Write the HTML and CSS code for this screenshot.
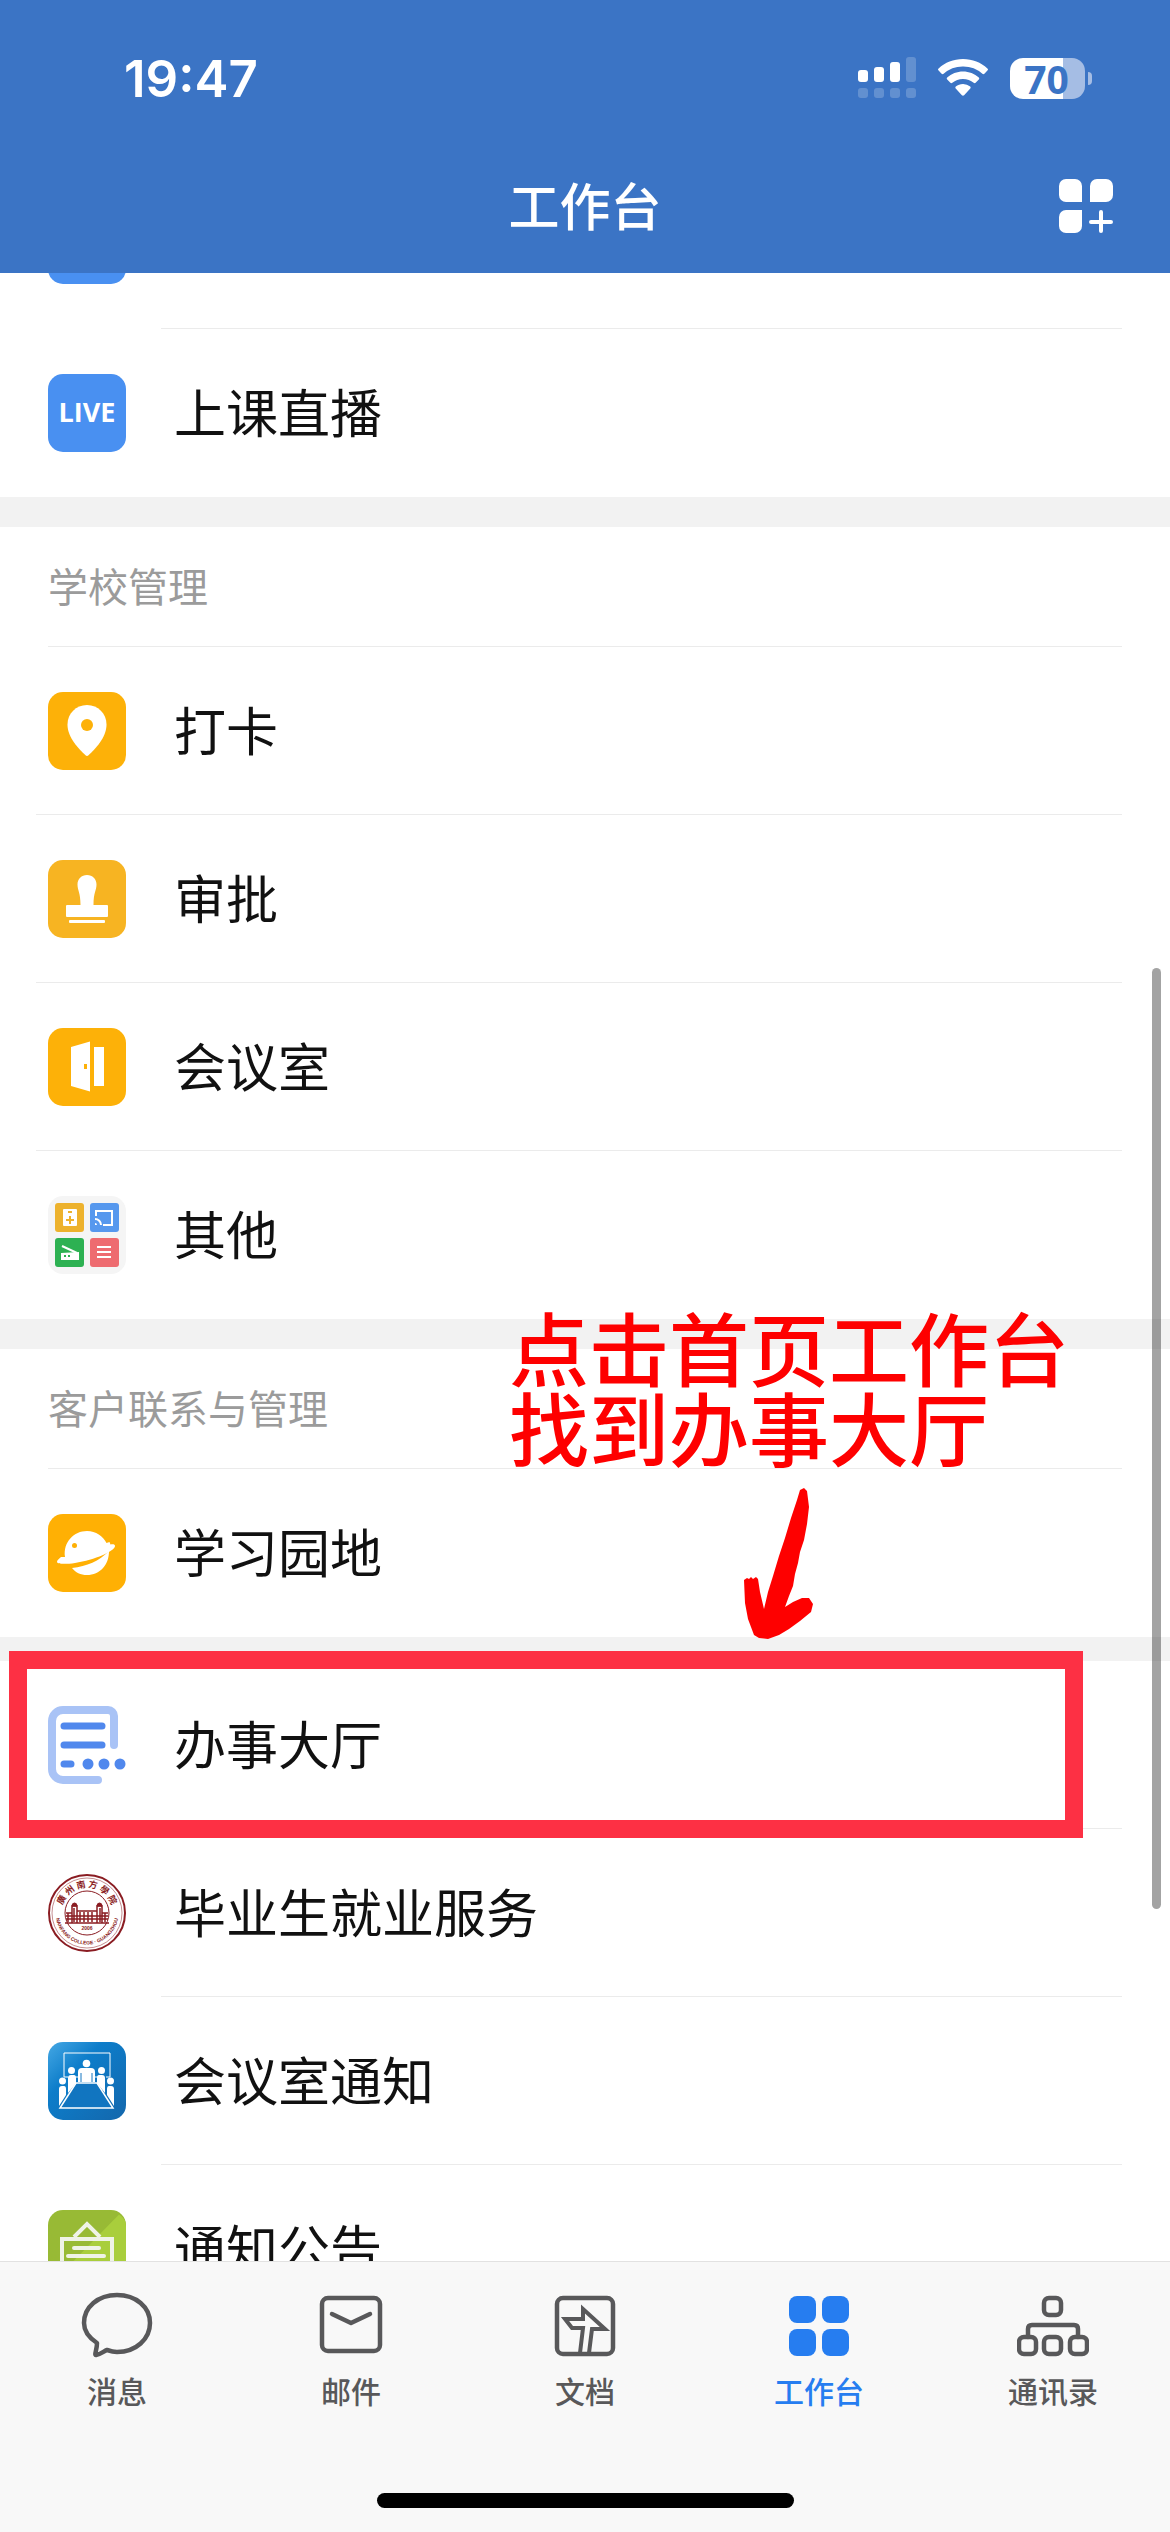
FILE: index.html
```html
<!DOCTYPE html>
<html lang="zh-CN">
<head>
    <meta charset="UTF-8">
    <meta name="viewport" content="width=device-width, initial-scale=1.0">
    <title>工作台</title>
    <link rel="stylesheet" href="styles.css">
</head>
<body>
    <header class="header">
        <div class="status-bar">
            <span class="time">19:47</span>
            <div class="status-icons">
                <svg class="signal" viewBox="0 0 58 42" fill="#fff">
                    <rect x="0" y="13" width="10" height="12" rx="3"/>
                    <rect x="16" y="10" width="10" height="15" rx="3"/>
                    <rect x="32" y="5" width="10" height="20" rx="3"/>
                    <g opacity="0.2">
                        <rect x="48" y="0" width="10" height="25" rx="3"/>
                        <rect x="0" y="31" width="10" height="10" rx="3"/>
                        <rect x="16" y="31" width="10" height="10" rx="3"/>
                        <rect x="32" y="31" width="10" height="10" rx="3"/>
                        <rect x="48" y="31" width="10" height="10" rx="3"/>
                    </g>
                </svg>
                <svg class="wifi" viewBox="0 0 50 38" fill="#fff">
                    <path d="M25 0C15.500 0 7 3.500 .6 9.400a1.500 1.500 0 0 0 0 2.200l3 3.100c.6.6 1.400.6 2 .1A28.500 28.500 0 0 1 25 7.500a28.500 28.500 0 0 1 19.400 7.300c.6.5 1.400.5 2-.1l3-3.100a1.500 1.500 0 0 0 0-2.200C43 3.500 34.500 0 25 0z"/>
                    <path d="M25 12.500c-6 0-11.600 2.300-15.800 6-.6.6-.6 1.500 0 2.100l3.200 3.200c.5.5 1.300.5 1.900 0A16.500 16.500 0 0 1 25 20c4.100 0 7.800 1.400 10.700 3.800.6.500 1.400.5 1.900 0l3.200-3.200c.6-.6.6-1.500 0-2.100-4.200-3.700-9.800-6-15.800-6z"/>
                    <path d="M25 25c-2.800 0-5.300 1-7.200 2.600-.6.5-.6 1.300-.1 1.900l6.200 6.700c.6.6 1.600.6 2.200 0l6.200-6.700c.5-.6.5-1.400-.1-1.900A11 11 0 0 0 25 25z"/>
                </svg>
                <div class="battery">70</div>
            </div>
        </div>
        <div class="title-bar">
            <h1>工作台</h1>
            <button class="add-btn" aria-label="添加应用">
                <svg viewBox="0 0 54 54" fill="#fff">
                    <path d="M7 0h9a7 7 0 0 1 7 7v16H7a7 7 0 0 1-7-7V7a7 7 0 0 1 7-7z"/>
                    <path d="M38 0h9a7 7 0 0 1 7 7v9a7 7 0 0 1-7 7H31V7a7 7 0 0 1 7-7z"/>
                    <path d="M7 31h16v16a7 7 0 0 1-7 7H7a7 7 0 0 1-7-7v-9a7 7 0 0 1 7-7z"/>
                    <path d="M42 33v19M32 43h20" stroke="#fff" stroke-width="4" stroke-linecap="round"/>
                </svg>
            </button>
        </div>
    </header>

    <main class="content">
        <section class="section scrolled">
            <a href="#" class="row" aria-label="直播">
                <span class="icon icon-live"></span>
            </a>
            <a href="#" class="row">
                <span class="icon icon-live">LIVE</span>
                <span class="name">上课直播</span>
            </a>
        </section>

        <section class="section wide">
            <h2>学校管理</h2>
            <a href="#" class="row">
                <svg class="icon" viewBox="0 0 78 78">
                    <rect width="78" height="78" rx="15" fill="#fdb108"/>
                    <path d="M39 13c-11 0-19.500 8.500-19.500 19.500C19.500 46 31 57 37.500 63.200a2.200 2.200 0 0 0 3 0C47 57 58.500 46 58.500 32.500 58.500 21.500 50 13 39 13z" fill="#fff"/>
                    <circle cx="39" cy="33" r="6" fill="#fdb108"/>
                </svg>
                <span class="name">打卡</span>
            </a>
            <a href="#" class="row">
                <svg class="icon" viewBox="0 0 78 78">
                    <rect width="78" height="78" rx="15" fill="#f7b422"/>
                    <g fill="#fff">
                        <path d="M39 15c-5.500 0-9.500 4-9.500 9.500 0 6 3 8 3 20.500h13c0-12.500 3-14.500 3-20.500 0-5.500-4-9.500-9.500-9.500z"/>
                        <rect x="18" y="45" width="42" height="12" rx="1"/>
                        <rect x="21" y="60" width="36" height="3" rx="1"/>
                    </g>
                </svg>
                <span class="name">审批</span>
            </a>
            <a href="#" class="row">
                <svg class="icon" viewBox="0 0 78 78">
                    <rect width="78" height="78" rx="15" fill="#fdb108"/>
                    <path d="M23 19l19-5.500v50L23 58zM46 19h10v39H46z" fill="#fff"/>
                    <rect x="36" y="36" width="3" height="5" fill="#fdb108"/>
                </svg>
                <span class="name">会议室</span>
            </a>
            <a href="#" class="row">
                <svg class="icon" viewBox="0 0 78 78">
                    <rect width="78" height="78" rx="15" fill="#f5f5f5"/>
                    <rect x="7" y="7" width="29" height="29" rx="3" fill="#edb22d"/>
                    <rect x="42" y="7" width="29" height="29" rx="3" fill="#5698ee"/>
                    <rect x="7" y="42" width="29" height="29" rx="3" fill="#2db152"/>
                    <rect x="42" y="42" width="29" height="29" rx="3" fill="#ee6b70"/>
                    <rect x="15" y="13" width="14" height="17" rx="1" fill="#fff"/>
                    <path d="M22 20v8M18 24h8M20 16h4" stroke="#edb22d" stroke-width="2"/>
                    <path d="M48 20v-5h16v14h-9" fill="none" stroke="#fff" stroke-width="2"/>
                    <path d="M47 29v-2a2 2 0 0 1 2 2z" fill="#fff"/>
                    <path d="M47 23a6 6 0 0 1 6 6" fill="none" stroke="#fff" stroke-width="2"/>
                    <path d="M14 50l15 7" stroke="#fff" stroke-width="2"/>
                    <path d="M13 57l18-1v8H13z" fill="#fff"/>
                    <path d="M16 60h2M20 60h2" stroke="#2db152" stroke-width="2"/>
                    <path d="M49 51h14M49 56h14M49 61h14" stroke="#fff" stroke-width="2"/>
                </svg>
                <span class="name">其他</span>
            </a>
        </section>

        <section class="section">
            <h2>客户联系与管理</h2>
            <a href="#" class="row">
                <svg class="icon" viewBox="0 0 78 78">
                    <rect width="78" height="78" rx="15" fill="#ffb004"/>
                    <path d="M17 43C15 28 26 17 39 17c9 0 16 5 19.500 12l3-1 1 2.500c3-.5 4.500 0 4.500 1.500C67 37 47 46 27 49c-10 1.500-18 1-18-1 0-1.500 1.500-3 4-5z" fill="#fff"/>
                    <path d="M61 37c0 14-9 24-22 24-6.500 0-11.500-2.500-15-7 15-1.500 27-7 37-17z" fill="#fff"/>
                    <circle cx="26.500" cy="31.500" r="2.500" fill="#ffb004"/>
                </svg>
                <span class="name">学习园地</span>
            </a>
            <div class="tip">
                <p>点击首页工作台<br>找到办事大厅</p>
                <svg class="tip-arrow" viewBox="0 0 69 152" fill="#fe0000">
                    <path d="M60 0L63 3 65 19 63 36 60 52 56 64 54 75 51 86 49 98 45 108 41 119 49 114 58 110 65 110 69 116 67 124 56 133 45 141 35 147 24 151 15 150 10 147 4 131 1 115 0 92 3 90 5 91 7 89 9 91 12 89 14 91 16 104 20 121 24 104 29 88 35 68 41 50 47 30 53 12 56 2z"/>
                </svg>
            </div>
        </section>

        <section class="section last">
            <a href="#" class="row marked">
                <svg class="icon" viewBox="0 0 78 78" fill="none" stroke-linecap="round">
                    <path d="M66 39V10a6 6 0 0 0-6-6H15A11 11 0 0 0 4 15v48a11 11 0 0 0 11 11h35" stroke="#a9c3f6" stroke-width="8"/>
                    <path d="M16 20h38M16 39h38M16 58h7" stroke="#5088ed" stroke-width="7"/>
                    <g fill="#5088ed">
                        <circle cx="40" cy="58" r="5.500"/>
                        <circle cx="56" cy="58" r="5.500"/>
                        <circle cx="72" cy="58" r="5.500"/>
                    </g>
                </svg>
                <span class="name">办事大厅</span>
            </a>
            <a href="#" class="row">
                <svg class="icon" viewBox="0 0 78 78" fill="none" stroke="#8a1c22">
                    <defs>
                        <path id="arc-top" d="M13.500 39a25.500 25.500 0 0 1 51 0"/>
                        <path id="arc-bottom" d="M7.500 39a31.500 31.500 0 0 0 63 0"/>
                    </defs>
                    <circle cx="39" cy="39" r="38" stroke-width="2"/>
                    <circle cx="39" cy="39" r="35" stroke-width="0.500"/>
                    <circle cx="39" cy="39" r="22" stroke-width="1"/>
                    <path d="M17 49h44M24 32h5v17h-5zM49 32h5v17h-5z" stroke-width="1.500"/>
                    <path d="M24 32a2.500 3 0 0 1 5 0zM49 32a2.500 3 0 0 1 5 0z" fill="#8a1c22"/>
                    <path d="M18 39h6M29 37h20M54 39h6M18 42h42M18 45h42M20 39v9M32 38v10M36 38v10M40 38v10M44 38v10M57 39v9M26 34v14M52 34v14" stroke-width="1.500"/>
                    <g fill="#8a1c22" stroke="none" font-weight="700">
                        <text class="emblem-cn"><textPath href="#arc-top" startOffset="50%" text-anchor="middle">廣 州 南 方 學 院</textPath></text>
                        <text class="emblem-en"><textPath href="#arc-bottom" startOffset="50%" text-anchor="middle">NANFANG COLLEGE · GUANGZHOU</textPath></text>
                        <text class="emblem-en" x="39" y="56" text-anchor="middle">2006</text>
                    </g>
                </svg>
                <span class="name">毕业生就业服务</span>
            </a>
            <a href="#" class="row">
                <svg class="icon" viewBox="0 0 78 78">
                    <defs>
                        <linearGradient id="meeting" x1="0" y1="0" x2="1" y2="1">
                            <stop offset="0" stop-color="#45a8e4"/>
                            <stop offset="0.350" stop-color="#0d7dca"/>
                            <stop offset="1" stop-color="#1467ac"/>
                        </linearGradient>
                    </defs>
                    <rect width="78" height="78" rx="15" fill="url(#meeting)"/>
                    <path d="M16 35V11h46v24M16 35h4M27 35h4M47 35h4M58 35h4" fill="none" stroke="#fff" stroke-width="1"/>
                    <g fill="#fff">
                        <circle cx="38.500" cy="21.500" r="3.800"/>
                        <circle cx="23.500" cy="28.500" r="3.500"/>
                        <circle cx="53.500" cy="28.500" r="3.500"/>
                        <circle cx="14.500" cy="39" r="3.500"/>
                        <circle cx="62.500" cy="39" r="3.500"/>
                        <path d="M30 40V30q0-4 4-4h9q4 0 4 4v10z"/>
                        <path d="M20 51V36q0-3 3-3h3q2 0 2 3v5zM57 51V36q0-3-3-3h-3q-2 0-2 3v5z"/>
                        <path d="M11 64V47q0-3 3-3h2q2 0 2 3v6zM66 64V47q0-3-3-3h-2q-2 0-2 3v6z"/>
                    </g>
                    <path d="M33 31v9M44 31v9" stroke="#1477c2"/>
                    <path d="M28 41h21l16 25H12z" fill="#1175c0" stroke="#fff" stroke-width="1.500"/>
                </svg>
                <span class="name">会议室通知</span>
            </a>
            <a href="#" class="row">
                <svg class="icon" viewBox="0 0 78 78">
                    <rect width="78" height="78" rx="15" fill="#98ba35"/>
                    <path d="M71 4.500C76 8 78 11 78 17v46a15 15 0 0 1-15 15H15c-4 0-8-2-11-5z" fill="#a9ce3c"/>
                    <g fill="none" stroke="#eff3e6" stroke-width="4">
                        <path d="M26 27l13-13 13 13M14 78V29h50v49"/>
                        <path d="M26 38h25M20 46h36M26 54h25" stroke-linecap="round"/>
                    </g>
                </svg>
                <span class="name">通知公告</span>
            </a>
        </section>

        <div class="scrollbar"></div>
    </main>

    <footer class="footer">
        <nav class="tabs">
            <a href="#" class="tab">
                <svg viewBox="0 0 72 66">
                    <path d="M16 51C7 45 3 38 3 31 3 15 17 3 36 3s33 12 33 28-14 29-33 29c-4 0-7-1-10-2-3 1-6 4-11 5-2 0 1-5 1-12z"/>
                </svg>
                <span>消息</span>
            </a>
            <a href="#" class="tab">
                <svg viewBox="0 0 72 66">
                    <rect x="7" y="6" width="58" height="53" rx="6"/>
                    <path d="M17 22l19 9 19-9"/>
                </svg>
                <span>邮件</span>
            </a>
            <a href="#" class="tab">
                <svg viewBox="0 0 72 66">
                    <rect x="8" y="6" width="56" height="56" rx="6"/>
                    <path class="thin" d="M31 61l3-25H23l-7-9h18V17l22 20H43l-3 24"/>
                </svg>
                <span>文档</span>
            </a>
            <a href="#" class="tab active" aria-current="page">
                <svg viewBox="0 0 72 66">
                    <rect x="6" y="4" width="27" height="27" rx="8"/>
                    <rect x="39" y="4" width="27" height="27" rx="8"/>
                    <rect x="6" y="37" width="27" height="27" rx="8"/>
                    <rect x="39" y="37" width="27" height="27" rx="8"/>
                </svg>
                <span>工作台</span>
            </a>
            <a href="#" class="tab">
                <svg viewBox="0 0 72 66">
                    <rect x="27" y="6" width="17" height="17" rx="5"/>
                    <rect x="2" y="45" width="17" height="17" rx="5"/>
                    <rect x="27" y="45" width="17" height="17" rx="5"/>
                    <rect x="53" y="45" width="17" height="17" rx="5"/>
                    <path d="M11 45V37q0-4 4-4h42q4 0 4 4v8"/>
                </svg>
                <span>通讯录</span>
            </a>
        </nav>
        <div class="home-indicator"></div>
    </footer>
</body>
</html>
```

FILE: styles.css
```css
* {
    margin: 0;
    padding: 0;
    box-sizing: border-box;
}
body {
    height: 100vh;
    display: flex;
    flex-direction: column;
    overflow: hidden;
    background: #f2f2f2;
    font-family: "Noto Sans CJK SC", sans-serif;
    color: #111;
}
a {
    color: inherit;
    text-decoration: none;
}

/* header */
.header {
    flex: none;
    background: #3b74c5;
    color: #fff;
}
.status-bar {
    height: 142px;
    padding: 14px 78px 0 124px;
    display: flex;
    align-items: center;
    justify-content: space-between;
}
.time {
    font-family: Inter, sans-serif;
    font-size: 51px;
    font-weight: 600;
}
.status-icons {
    display: flex;
    align-items: center;
    gap: 22px;
}
.signal {
    width: 58px;
    height: 42px;
}
.wifi {
    width: 50px;
    height: 38px;
}
.battery {
    position: relative;
    width: 75px;
    margin-right: 7px;
    padding-right: 2px;
    border-radius: 13px;
    background: linear-gradient(to right, #fff 71%, #a5bde4 71%);
    color: #3b74c5;
    font-family: "Open Sans", sans-serif;
    font-size: 39px;
    font-weight: 700;
    line-height: 41px;
    text-align: center;
}
.battery::after {
    content: "";
    position: absolute;
    right: -7px;
    top: 14px;
    width: 4px;
    height: 13px;
    border-radius: 0 6px 6px 0;
    background: #a5bde4;
}
.title-bar {
    height: 131px;
    padding: 0 57px 4px;
    display: grid;
    grid-template-columns: 1fr auto 1fr;
    align-items: center;
}
h1 {
    grid-column: 2;
    padding-bottom: 4px;
    font-size: 51px;
    font-weight: 500;
}
.add-btn {
    justify-self: end;
    width: 54px;
    height: 54px;
    border: none;
    background: none;
    cursor: pointer;
}
.add-btn svg {
    display: block;
}

/* app list */
.content {
    position: relative;
    flex: 1;
    min-height: 0;
    overflow: hidden;
}
.section {
    position: relative;
    margin-bottom: 30px;
    background: #fff;
}
.scrolled {
    margin-top: -112px;
}
.last {
    margin-top: -6px;
}
h2 {
    height: 120px;
    margin: 0 48px;
    border-bottom: 1px solid #ebebeb;
    color: #9b9b9b;
    font-size: 40px;
    font-weight: 400;
    line-height: 116px;
}
.row {
    position: relative;
    height: 168px;
    padding: 0 48px;
    display: flex;
    align-items: center;
    gap: 48px;
}
.row:not(:last-child)::after {
    content: "";
    position: absolute;
    left: 161px;
    right: 48px;
    bottom: 0;
    height: 1px;
    background: #ebebeb;
}
.wide .row::after {
    left: 36px;
}
.section:has(.tip) .row::after {
    display: none;
}
.icon {
    flex: none;
    width: 78px;
    height: 78px;
}
.icon-live {
    border-radius: 15px;
    background: #4990f1;
    color: #fff;
    font-family: "Open Sans", sans-serif;
    font-size: 27px;
    font-weight: 700;
    line-height: 76px;
    text-align: center;
}
.name {
    padding-bottom: 5px;
    font-size: 52px;
}
.emblem-cn {
    font-family: "Noto Sans CJK TC", sans-serif;
    font-size: 9px;
}
.emblem-en {
    font-family: "Liberation Sans", sans-serif;
    font-size: 5px;
}

/* red hint over the list */
.marked::before {
    content: "";
    position: absolute;
    z-index: 1;
    top: -10px;
    right: 87px;
    bottom: -9px;
    left: 9px;
    border: 18px solid #fd3044;
}
.tip {
    position: absolute;
    z-index: 1;
    top: -44px;
    left: 509px;
    color: #fe0000;
    font-size: 80px;
    font-weight: 500;
    line-height: 80px;
    white-space: nowrap;
}
.tip-arrow {
    display: block;
    width: 69px;
    height: 152px;
    margin: 23px 0 0 235px;
}
.scrollbar {
    position: absolute;
    top: 695px;
    right: 9px;
    width: 9px;
    height: 941px;
    border-radius: 5px;
    background: rgba(0, 0, 0, 0.36);
}

/* bottom tabs */
.footer {
    flex: none;
    padding: 30px 0 24px;
    border-top: 1px solid #e2e2e2;
    background: #f8f8f8;
}
.tabs {
    display: grid;
    grid-template-columns: repeat(5, 1fr);
}
.tab {
    display: flex;
    flex-direction: column;
    align-items: center;
    gap: 14px;
    color: #58585a;
    font-size: 30px;
    font-weight: 500;
    line-height: 36px;
}
.tab svg {
    width: 72px;
    height: 66px;
    fill: none;
    stroke: currentColor;
    stroke-width: 4.5;
    stroke-linecap: round;
    stroke-linejoin: round;
}
.tab .thin {
    stroke-width: 4;
    stroke-linejoin: miter;
}
.tab.active {
    color: #267df0;
}
.tab.active svg {
    fill: currentColor;
    stroke: none;
}
.home-indicator {
    width: 417px;
    height: 15px;
    margin: 85px auto 0;
    border-radius: 8px;
    background: #000;
}
```
